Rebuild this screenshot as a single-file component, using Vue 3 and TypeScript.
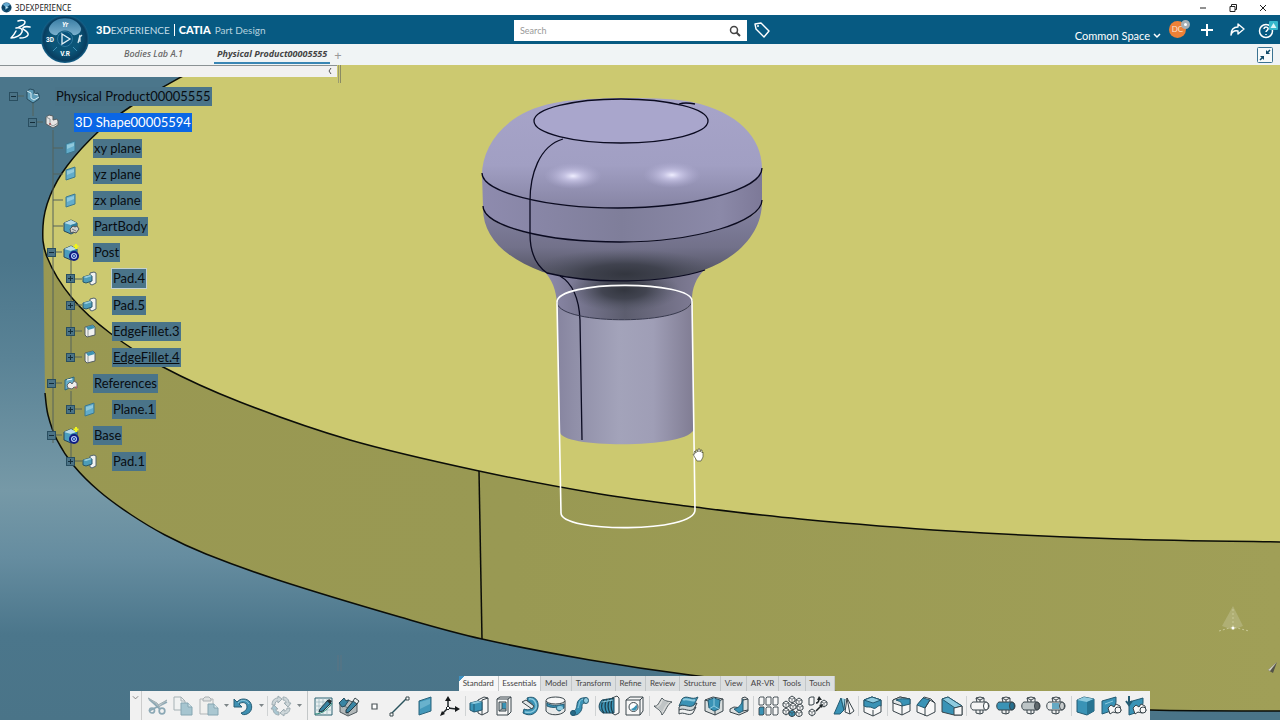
<script setup lang="ts">
import { ref } from 'vue'

type Point = [number, number]

interface TreeNode {
  label: string
  level: number
  icon: string
  toggle?: 'plus' | 'minus'
  state?: string
}

/* Smooth path through a list of points */
function curve(points: Point[], start = 'M'): string {
  let d = `${start}${points[0][0]} ${points[0][1]}`
  for (let i = 0; i < points.length - 1; i++) {
    const p0 = points[Math.max(i - 1, 0)]
    const p1 = points[i]
    const p2 = points[i + 1]
    const p3 = points[Math.min(i + 2, points.length - 1)]
    d += ` C${p1[0] + (p2[0] - p0[0]) / 6} ${p1[1] + (p2[1] - p0[1]) / 6} ${p2[0] - (p3[0] - p1[0]) / 6} ${p2[1] - (p3[1] - p1[1]) / 6} ${p2[0]} ${p2[1]}`
  }
  return d
}

const topEdge: Point[] = [
  [205, 65], [183, 76], [133, 105], [99, 131], [67, 166], [50, 196], [43, 226],
  [47, 257], [72, 298], [110, 333], [163, 367], [240, 402], [350, 440], [479, 471],
  [600, 494], [695, 507], [800, 519], [950, 531], [1120, 539], [1285, 542],
]
const bottomEdge: Point[] = [
  [45, 393], [48, 415], [57, 440], [74, 466], [99, 491], [130, 514], [165, 535], [206, 554], [278, 580],
  [400, 617], [482, 639], [590, 660], [690, 675], [850, 693], [1000, 704], [1150, 710], [1285, 711],
]
const topLine = curve(topEdge)
const bottomLine = curve(bottomEdge)
const topFace = `${topLine} L1285 60 L205 60 Z`
const discFace = `${curve([...bottomEdge].reverse())} L43 226 L72 298 L479 471 L900 500 L1285 500 Z`

const nodes: TreeNode[] = [
  { label: 'Physical Product00005555', level: 0, icon: 'product', toggle: 'minus' },
  { label: '3D Shape00005594', level: 1, icon: 'shape', toggle: 'minus', state: 'selected' },
  { label: 'xy plane', level: 2, icon: 'plane' },
  { label: 'yz plane', level: 2, icon: 'plane' },
  { label: 'zx plane', level: 2, icon: 'plane' },
  { label: 'PartBody', level: 2, icon: 'body' },
  { label: 'Post', level: 2, icon: 'bodyActive', toggle: 'minus' },
  { label: 'Pad.4', level: 3, icon: 'pad', toggle: 'plus', state: 'outlined' },
  { label: 'Pad.5', level: 3, icon: 'pad', toggle: 'plus' },
  { label: 'EdgeFillet.3', level: 3, icon: 'fillet', toggle: 'plus' },
  { label: 'EdgeFillet.4', level: 3, icon: 'fillet', toggle: 'plus', state: 'current' },
  { label: 'References', level: 2, icon: 'refs', toggle: 'minus' },
  { label: 'Plane.1', level: 3, icon: 'plane', toggle: 'plus' },
  { label: 'Base', level: 2, icon: 'bodyActive', toggle: 'minus' },
  { label: 'Pad.1', level: 3, icon: 'pad', toggle: 'plus' },
]

const cube = '<path d="M2 5 9 2l6 3v8l-6 3-7-3z" fill="#4a9dbd" stroke="#27475a"/><path d="M2 5 9 2l6 3-6 2z" fill="#b9dce8"/><path d="M9 7l6-2v8l-6 3z" fill="#2f7d9f"/>'
const treeIcons: Record<string, string> = {
  product: '<path d="M3 4l3-2 4 1v4l4-1 1 2v4l-6 4-6-4z" fill="#5f9db8" stroke="#274a5c"/><path d="M3 4l4 2v5l3 2 5-3M10 7l4 1" fill="none" stroke="#d9edf3"/>',
  shape: '<path d="M3 4l3-2 4 1v4l4-1 1 2v4l-5 3-7-4z" fill="#e6e4e3" stroke="#525c61"/><path d="M3 4l4 2v5l3 2 5-3" fill="none" stroke="#8f9697"/><circle cx="7" cy="11" r="1" fill="#a55"/>',
  plane: '<path d="M4 5l9-3v10l-9 3z" fill="#62acca" stroke="#3c788f"/><path d="M5 6l7-2v3l-7 3z" fill="#90c9dc"/>',
  body: cube + '<path d="M8 11l3-3 2 1 2-1 2 3-3 4-3-1-2 1z" fill="#d3d2ce" stroke="#555"/><path d="M10 11l4 2" stroke="#777"/>',
  bodyActive: cube + '<circle cx="12" cy="12" r="4" fill="#b9cdf7" stroke="#101d83" stroke-width="2"/><circle cx="12" cy="12" r="1.500" fill="none" stroke="#123a99"/><path d="M14 0v5M11.500 2.500h5" stroke="#eff51c" stroke-width="2"/>',
  pad: '<path d="M9 3l4-1 2 1v10l-4 2-2-1z" fill="#f1f2f1" stroke="#53646c"/><path d="M2 7l7-2 2 1v5l-6 2-3-1z" fill="#4d9cb8" stroke="#27576d"/><path d="M2 7l7-2 2 1-6 2z" fill="#9cd0df"/>',
  fillet: '<path d="M4 5l8-2 2 2v8l-8 2-2-2z" fill="#f1f1ef" stroke="#565e61"/><path d="M5 5l7-2 2 3-7 2z" fill="#3f93b1"/><path d="M7 8v6" stroke="#929999"/>',
  refs: '<path d="M3 5l9-3v9l-9 4z" fill="#67adc6" stroke="#2e667c"/><path d="M5 10l3-3 2 2 2-3 3 2v5l-3-1-2 2-4-1z" fill="#efeeec" stroke="#656b6e"/><path d="M5 5l5-1" stroke="#fff"/><path d="M14 11v3" stroke="#c55"/>',
}

const B = '#3a93b6'
const L = '#8fcbdf'
const K = '#39444a'
const W = '#f7f7f7'
const joint = (a: string, b: string, c: string) =>
  `<path d="M7 3l4-1 4 1v5l-1 1v9l-3 1-4-1V9l1-2z" fill="${a}" stroke="${K}"/><path d="M7 3l4 2 4-2M11 5v3M11 13v6" fill="none" stroke="${K}"/><path d="M4 7h13c4 1 4 7 0 8H4c-3-1-3-7 0-8z" fill="${b}" stroke="${K}"/><ellipse cx="17" cy="11" rx="2.500" ry="4" fill="${c}" stroke="${K}"/>`
const hexes = (pts: Point[], blue: number) =>
  pts.map(([x, y], i) => `<path d="M${x - 3} ${y - 1}l3-2 3 2v3l-3 2-3-2z" fill="${i === blue ? B : W}" stroke="${K}"/><path d="M${x - 3} ${y - 1}l3 1 3-1M${x} ${y}v4" fill="none" stroke="${K}" stroke-width=".6"/>`).join('')

const icons: Record<string, string> = {
  cut: '<g fill="none" stroke="#8ba8b5" stroke-width="1.700"><path d="M2 4l11 10M2 16L20 7"/><circle cx="15" cy="16" r="2.800"/><circle cx="5" cy="15.500" r="2.500"/></g><path d="M1 3l9 5 2 3zM20 5l-9 5 1 2z" fill="#c4ced2" stroke="#9fafb5"/>',
  copy: '<path d="M2 2h7l4 4v9H2z" fill="#f0f2f2" stroke="#a5b1b5"/><path d="M9 2v4h4" fill="none" stroke="#a5b1b5"/><path d="M9 8h7l4 4v8H9z" fill="#a6c5d0" stroke="#86a6b2"/><path d="M16 8v4h4" fill="#d5e4e9" stroke="#86a6b2"/>',
  paste: '<path d="M2 4h13v15H2z" fill="#f0f0ee" stroke="#b0b5b7"/><path d="M5 4l2-2h4l2 2v2H5z" fill="#dfe2e2" stroke="#a9b0b3"/><path d="M10 9h6l4 4v7H10z" fill="#aac7d1" stroke="#86a6b2"/><path d="M16 9v4h4" fill="#dce8ec" stroke="#86a6b2"/>',
  undo: '<path d="M2 4v8h8l-3-3c4-3 8-1 8 3 0 3-3 5-6 6 1 2 4 2 6 1 5-2 6-8 3-12C15 3 8 3 5 7z" fill="#3f90b2" stroke="#285e76"/><path d="M6 8c3-4 9-3 11 1" fill="none" stroke="#8ec6da"/>',
  update: '<g fill="#cdd6d9" stroke="#9cabb1"><path d="M2 10c0-4 2-7 6-7V1l4 3-4 4V6C6 6 5 7 5 10z"/><path d="M13 2c4 0 6 3 6 6h2l-3 4-4-4h2c0-2-1-3-3-3z"/><path d="M20 13c0 4-3 6-6 6v2l-4-3 4-4v2c2 0 3-1 3-3z"/><path d="M9 20c-4 0-6-3-6-6H1l3-4 4 4H6c0 2 1 3 3 3z" fill="#a9c7d2"/></g>',
  sketch: '<path d="M3 3h17v17H3z" fill="#e7eff0" stroke="#2c6272"/><path d="M3 7h17M3 11h17M3 15h17M7 3v17M11 3v17M15 3v17" stroke="#9bb8be" stroke-width=".7"/><path d="M3 19c8 0 14-6 17-11" fill="none" stroke="#2a8b78"/><path d="M8 14l8-9 3 3-8 8-4 1z" fill="#3782a0" stroke="#223843"/><path d="M15 6l2-2 3 2-2 3z" fill="#273238"/>',
  sketch3d: '<path d="M2 9l8-4 9 4v8l-9 4-8-4z" fill="#b2b8b9" stroke="#4d575c"/><path d="M2 9l8 4 9-4M10 13v8" fill="none" stroke="#6b7578"/><path d="M1 8l5-5 2 3 3-1-4 6-3 1z" fill="#3985a4" stroke="#284c5d"/><path d="M8 15l8-10 4 3-9 9-3 1z" fill="#3985a4" stroke="#223943"/><path d="M15 6l2-3 4 3-2 3z" fill="#e6ecec" stroke="#3b474c"/>',
  point: '<path d="M9 9h5v5H9z" fill="#fff" stroke="#4c5558" stroke-width="1.200"/>',
  line: '<path d="M3 19L19 3" stroke="#29535d" stroke-width="1.500"/><path d="M2 18h3v3H2zM18 2h3v3h-3z" fill="#fff" stroke="#3a4a4e"/>',
  plane: '<path d="M5 6l12-4v14L5 20z" fill="#4499bb" stroke="#2b647c"/><path d="M6 7l10-3v5L6 14z" fill="#69b2cd"/>',
  axis: '<path d="M9 13V5M9 13l8 1M9 13l-5 5" stroke="#20272a" stroke-width="1.500"/><path d="M9 1l3 5H6zM21 14l-5 3v-6zM1 21l2-5 3 3z" fill="#16191b"/><path d="M9 11l2 2-2 2-2-2z" fill="#fff" stroke="#20272a"/>',
  pad: `<path d="M10 5l6-3 4 1v14l-6 3-4-2z" fill="${W}" stroke="${K}"/><path d="M14 5v15M14 5l6-2" fill="none" stroke="${K}"/><path d="M2 8l8-2 4 1v8l-8 2-4-2z" fill="${B}" stroke="#235870"/><path d="M2 8l8-2 4 1-8 2z" fill="${L}"/><path d="M6 9v8" stroke="#235870"/>`,
  pocket: `<path d="M4 4l3-2h11v15l-3 3H4z" fill="${W}" stroke="${K}"/><path d="M4 4h11v16M15 4l3-2" fill="none" stroke="${K}"/><path d="M6 7h7v9H6z" fill="#c5cfd2" stroke="${K}"/><path d="M9 8h4v6H9z" fill="${B}"/><path d="M6 16l3-2h4M9 14V8" fill="none" stroke="${K}" stroke-width=".8"/>`,
  shaft: `<path d="M8 3c8-3 12 3 11 9-1 7-8 10-15 6l1-4c5 2 8 0 8-4 0-3-2-3-4-3z" fill="${B}" stroke="#235870"/><path d="M10 4c5-1 8 4 7 9-2 4-6 5-11 4" fill="none" stroke="${L}" stroke-width="1.500"/><path d="M3 7l4-2 8 6-2 3z" fill="#e1e6e7" stroke="${K}"/>`,
  groove: `<path d="M2 6v10c3 5 15 5 19 0V6z" fill="#e8eaea" stroke="${K}"/><ellipse cx="11.500" cy="5.500" rx="9.500" ry="3.500" fill="${W}" stroke="${K}"/><path d="M3 8c4 3 10 3 17 1v4c-3 1-3 3-5 3-3-1-3-3-2-4-4 1-8 0-10-1z" fill="${B}" stroke="#235870"/><ellipse cx="16" cy="13" rx="3" ry="2" fill="${L}"/>`,
  rib: `<path d="M3 16c4 0 4-2 5-6 0-5 4-8 9-7v5c-4 0-4 1-4 5-1 5-5 8-10 7z" fill="${B}" stroke="#235870"/><ellipse cx="17" cy="5.500" rx="2.500" ry="3" fill="${L}" stroke="#235870"/><ellipse cx="4" cy="18" rx="2.500" ry="2.500" fill="#276a87" stroke="#235870"/><path d="M9 13c2-4 0-7 5-9" fill="none" stroke="${L}"/>`,
  thread: `<path d="M14 3l5-2 2 2v15l-4 2-3-2z" fill="${W}" stroke="${K}"/><path d="M4 5l12-2v15L5 18C0 15 0 9 4 5z" fill="${B}" stroke="#1f495c"/><path d="M6 5c-3 4-3 9 0 13M9 4c-3 5-2 11 0 14M12 4c-3 5-2 11 0 14M15 3c-3 5-2 12 0 15" fill="none" stroke="#1f3f4c" stroke-width="1.300"/><path d="M4 7l11-2" stroke="${L}"/>`,
  hole: `<path d="M3 5l4-3h13v14l-3 4H3z" fill="${W}" stroke="${K}"/><path d="M3 5h14v15M17 5l3-3" fill="none" stroke="${K}"/><circle cx="10.500" cy="12" r="4.500" fill="#fff" stroke="${K}"/><path d="M14 10c-2 0-2 3-6 4 2 3 7 2 6-4z" fill="${B}"/>`,
  surface: '<path d="M2 11c4 1 5-4 8-8 3 4 7 3 10 4-5 2-6 9-10 13-1-5-5-6-8-9z" fill="#d8dad9" stroke="#4c575c"/><path d="M5 12c4 0 5-6 6-7l6 3c-4 1-5 6-7 9z" fill="#bfc4c5"/>',
  thick: `<path d="M2 15c5-5 8 2 17-3l-3 6c-5 4-9-2-14 1z" fill="#f0f2f2" stroke="${K}"/><path d="M2 12c5-5 8 2 18-4l-3 6c-5 4-10-2-15 1z" fill="#cfd7d9" stroke="${K}"/><path d="M5 4c5-5 9 2 16-2l-4 8c-5 4-10-2-15 1z" fill="${B}" stroke="#29586b"/><path d="M6 5c4-3 8 2 12 0" fill="none" stroke="${L}" stroke-width="2"/>`,
  shell: `<path d="M2 5l8-3 10 2v12l-8 4-10-4z" fill="#d9dede" stroke="${K}"/><path d="M2 5l10 3 8-4M12 8v12" fill="none" stroke="${K}"/><path d="M5 5l6-2 6 2-1 9-5 2-5-3z" fill="${B}" stroke="#245b72"/><path d="M11 3v8l-5 3M11 11l5 3" fill="none" stroke="${L}"/>`,
  stiffener: `<path d="M14 3l3-1 3 2v12l-9 4-9-3v-3l4-2 8 1z" fill="#dce0e0" stroke="${K}"/><path d="M6 14c5-1 8-5 9-10v12l-4 2z" fill="${B}" stroke="#245b72"/><path d="M15 5l5-1M15 16l5-1" stroke="${K}"/>`,
  rectPattern: [2, 9, 16].map(x => [2, 12].map(y => `<path d="M${x} ${y + 1}l1-1h4v7l-1 1H${x}z" fill="${x === 2 && y === 12 ? B : W}" stroke="${K}" stroke-width=".9"/>`).join('')).join(''),
  circPattern: hexes([[10, 4], [17, 6], [4, 9], [11, 11], [18, 12], [4, 16], [10, 18], [17, 18]], 6),
  userPattern: '<path d="M2 3l2-1h3v7l-2 1H2z" fill="#f7f7f7" stroke="#39444a"/>' + hexes([[17, 8], [5, 17]], -1) + '<path d="M9 8c3 0 3-3 3-5M9 16l5-5" fill="none" stroke="#202729" stroke-width="1.500"/><path d="M12 1l3 4h-5zM16 9l-1 4-3-3z" fill="#202729"/>',
  mirror: `<path d="M1 19L8 3l3 12-4 4z" fill="${B}" stroke="#245b72"/><path d="M8 3l3 12 1-11" fill="${L}" stroke="#245b72"/><path d="M14 3l7 13-4 3-5-2z" fill="${W}" stroke="${K}"/><path d="M14 3l3 16" stroke="${K}"/>`,
  split: `<path d="M3 5l8-3 9 3v12l-8 4-9-4z" fill="${W}" stroke="${K}"/><path d="M3 5l8-3 9 3v6c-3-2-5 4-8 2s-6 0-9-2z" fill="${B}" stroke="#245b72"/><path d="M3 5l9 3 8-3-9-3z" fill="${L}" stroke="#245b72"/><path d="M12 15v6" stroke="${K}"/>`,
  edgeFillet: `<path d="M3 5l7-3 10 2v12l-8 4-9-4z" fill="${W}" stroke="${K}"/><path d="M3 5l7-3 10 2-6 2-2 5-9-3z" fill="#dfe4e5" stroke="${K}"/><path d="M6 5c4-2 9-1 14-1v5l-8 2c0-3 0-4-6-6z" fill="${B}" stroke="#245b72"/><path d="M12 11v9" stroke="${K}"/>`,
  chamfer: `<path d="M2 10l7-8 7 2 4 4v9l-8 4-10-4z" fill="${W}" stroke="${K}"/><path d="M2 10l6-7 7 2-5 8z" fill="${B}" stroke="#245b72"/><path d="M10 13l5-8 5 3M10 13v8" fill="none" stroke="${K}"/>`,
  draft: `<path d="M1 4l6-2 14 9v9h-8L1 17z" fill="${B}" stroke="${K}"/><path d="M1 4l6-2 14 9-7 2z" fill="${L}" stroke="#245b72"/><path d="M13 13l8-2v9h-8z" fill="${W}" stroke="${K}"/>`,
  assemble: joint('#f0f1f1', '#f4f4f4', '#fff'),
  add: joint('#f0f1f1', B, '#276f8e'),
  remove: joint('#f0f1f1', '#bcc4c6', '#60696d'),
  intersect: joint('#f0f1f1', '#e9ebeb', '#c8cccd') + `<path d="M7 8h7v6H7z" fill="${B}" opacity=".75"/>`,
  solid: `<path d="M3 5l7-3 10 2v12l-7 4-10-3z" fill="${B}" stroke="#245b72"/><path d="M3 5l7-3 10 2-7 3z" fill="${L}"/><path d="M13 7l7-3v12l-7 4z" fill="#287492"/>`,
  planeRef: `<path d="M2 6l14-4v5l-2 8-12 4z" fill="${B}" stroke="#245b72"/><path d="M5 9l8-3" stroke="${L}"/><path d="M8 13l3-3 3 2 2-3 4 2 1 5-4 2-4-1-3 2z" fill="${W}" stroke="${K}"/><circle cx="18" cy="15" r="3" fill="${W}" stroke="${K}"/>`,
  planeIn: `<path d="M4 7l14-4v5l-2 8-12 4z" fill="${B}" stroke="#245b72"/><path d="M4 1v8M1 6l3 4 3-4" fill="none" stroke="#245b72" stroke-width="2"/><path d="M8 13l3-3 3 2 2-3 4 2 1 5-4 2-4-1-3 2z" fill="${W}" stroke="${K}"/><circle cx="18" cy="15" r="3" fill="${W}" stroke="${K}"/>`,
}

const tools: string[] = [
  'cut', 'copy', 'paste', '>', 'undo', '>', '|', 'update', '>', '||', 'sketch', 'sketch3d', 'point', 'line', 'plane', 'axis', '|',
  'pad', 'pocket', 'shaft', 'groove', 'rib', '|', 'thread', 'hole', '|', 'surface', 'thick', 'shell', 'stiffener', '|',
  'rectPattern', 'circPattern', 'userPattern', 'mirror', '|', 'split', '|', 'edgeFillet', 'chamfer', 'draft', '|',
  'assemble', 'add', 'remove', 'intersect', '|', 'solid', 'planeRef', 'planeIn',
]
const sections = ['Standard', 'Essentials', 'Model', 'Transform', 'Refine', 'Review', 'Structure', 'View', 'AR-VR', 'Tools', 'Touch']
const section = ref('Essentials')
const query = ref('')
</script>

<template>
  <div class="app">
    <div class="titlebar">
      <svg class="app-icon" viewBox="0 0 12 12"><circle cx="6" cy="6" r="5.500" fill="#0c4263" /><path d="M2 3c2-3 6-3 8 0L6 6z" fill="#65a8cf" /><path d="M5 4l3 2-3 2zM2 8l2 2M10 8L8 10" fill="#d8edf6" stroke="#5daad0" stroke-width=".6" /></svg>
      <span class="app-name">3DEXPERIENCE</span>
      <div class="window-buttons">
        <button aria-label="Minimize"><svg viewBox="0 0 10 10"><path d="M2 5h6" /></svg></button>
        <button aria-label="Restore"><svg viewBox="0 0 10 10"><path d="M2 3.500h5v5H2zM3.500 3.500v-2h5v5H7" /></svg></button>
        <button aria-label="Close"><svg viewBox="0 0 10 10"><path d="M2 2l6 6M8 2L2 8" /></svg></button>
      </div>
    </div>

    <header class="header">
      <svg class="ds-logo" viewBox="0 0 22 22"><g fill="none" stroke="#fff" stroke-linecap="round" stroke-linejoin="round"><path d="M9 2c3-1 7-1 7 1 0 2-3 4-6 5" stroke-width="1.500" /><path d="M7 9c4-1 7 1 6 4-1 3-6 6-11 6 2-2 4-5 5-7" stroke-width="1.500" /><path d="M21 8c-4-1-8 0-7 2 1 1 6 3 5 6-1 2-5 3-8 3" stroke-width="1.600" /></g></svg>
      <h1 class="brand"><b>3D</b><span class="soft">EXPERIENCE</span><i class="bar"></i><b>CATIA</b><span class="module">Part Design</span></h1>
      <form class="search" @submit.prevent>
        <input v-model="query" type="text" placeholder="Search" aria-label="Search" />
        <button aria-label="Run search"><svg viewBox="0 0 12 12"><circle cx="5" cy="5" r="3.500" fill="none" stroke="#444" stroke-width="1.500" /><path d="M7.500 7.500l3.500 3.500" stroke="#444" stroke-width="2" /></svg></button>
      </form>
      <button class="tag" aria-label="Tags"><svg viewBox="0 0 16 16"><path d="M1 2l6-1 8 8-5 6-8-8z" fill="none" stroke="#fff" stroke-width="1.400" stroke-linejoin="round" /><circle cx="4" cy="4" r="1" fill="#fff" /></svg></button>
      <div class="actions">
        <button class="space">Common Space <svg viewBox="0 0 8 6"><path d="M1 1l3 3 3-3" fill="none" stroke="#fff" stroke-width="1.500" /></svg></button>
        <button class="avatar" aria-label="Profile">DC<span class="presence"></span></button>
        <button class="glyph plus" aria-label="Add"><svg viewBox="0 0 16 16"><path d="M8 2v12M2 8h12" stroke="#fff" stroke-width="2" /></svg></button>
        <button class="glyph share" aria-label="Share"><svg viewBox="0 0 16 16"><path d="M9 2l6 5-6 5V9c-4-1-6 1-7 4 0-5 2-8 7-8z" fill="none" stroke="#fff" stroke-width="1.400" stroke-linejoin="round" /></svg></button>
        <button class="glyph help" aria-label="Help"><svg viewBox="0 0 20 18"><circle cx="8" cy="10" r="6.500" fill="none" stroke="#fff" stroke-width="1.500" /><path d="M6 8c0-3 5-2 4 0 0 1-2 2-2 3M8 13v1" fill="none" stroke="#fff" stroke-width="1.500" /><rect x="11" y="0" width="9" height="9" rx="1" fill="#35b8cc" /><path d="M15.500 2l3 5h-6z" fill="#d9f6f8" /></svg></button>
      </div>
      <svg class="compass" viewBox="0 0 50 50" aria-label="Compass">
        <defs>
          <radialGradient id="compassBase"><stop offset=".6" stop-color="#0b5578" /><stop offset=".9" stop-color="#083e60" /><stop offset="1" stop-color="#16638b" /></radialGradient>
          <linearGradient id="compassTop" x1="0" y1="0" x2="0" y2="1"><stop offset="0" stop-color="#397da4" /><stop offset="1" stop-color="#7ab0ce" /></linearGradient>
        </defs>
        <circle cx="25" cy="25" r="24" fill="url(#compassBase)" />
        <path d="M9 14C14 1 36 1 41 14c1 4-4 8-8 7-3-6-13-6-16 0-4 1-9-3-8-7z" fill="url(#compassTop)" />
        <circle cx="25" cy="25" r="7.500" fill="#07517a" stroke="#2f789c" />
        <path d="M22 20l8 5-8 5z" fill="#0c5d86" stroke="#e2f0f6" stroke-width="1.300" />
        <path d="M13 37l4-4M37 37l-4-4" stroke="#3d8fb5" />
        <path d="M40 21l-2 8M42 21l-2 2v5" fill="none" stroke="#d8e8ef" stroke-width="1.200" />
        <g fill="#fff" font-family="Roboto, sans-serif" font-weight="700" font-size="6.500" text-anchor="middle"><text x="10" y="28">3D</text><text x="25" y="13" font-style="italic">Yr</text><text x="25" y="42">V.R</text></g>
      </svg>
    </header>

    <nav class="doc-tabs">
      <a href="#lab">Bodies Lab A.1</a>
      <a href="#product" class="active">Physical Product00005555</a>
      <button class="add-tab" aria-label="New tab">+</button>
      <button class="collapse" aria-label="Exit full view"><svg viewBox="0 0 16 16"><rect x=".5" y=".5" width="15" height="15" rx="1" fill="#f7fafa" stroke="#3b7391" /><path d="M13 3l-3 3M3 13l3-3" stroke="#124b68" stroke-width="1.500" /><path d="M9 3v4h4zM7 13V9H3z" fill="#124b68" /></svg></button>
    </nav>

    <main class="viewport">
      <svg class="scene" viewBox="0 65 1280 655" preserveAspectRatio="xMidYMid slice" aria-hidden="true">
        <defs>
          <linearGradient id="sky" x1="0" y1="65" x2="0" y2="720" gradientUnits="userSpaceOnUse"><stop offset="0" stop-color="#4b768b" /><stop offset=".3" stop-color="#4b768b" /><stop offset=".45" stop-color="#5a8396" /><stop offset=".65" stop-color="#7699a7" /><stop offset=".75" stop-color="#668da0" /><stop offset=".87" stop-color="#4b768b" /><stop offset="1" stop-color="#4a7488" /></linearGradient>
          <linearGradient id="side" x1="0" y1="0" x2="1280" y2="0" gradientUnits="userSpaceOnUse"><stop offset="0" stop-color="#999852" /><stop offset=".4" stop-color="#999953" /><stop offset="1" stop-color="#a09f57" /></linearGradient>
          <linearGradient id="dome" x1="0" y1="98" x2="0" y2="210" gradientUnits="userSpaceOnUse"><stop offset="0" stop-color="#a7a4c9" /><stop offset=".6" stop-color="#a19fc3" /><stop offset="1" stop-color="#8583a2" /></linearGradient>
          <linearGradient id="band" x1="482" y1="0" x2="762" y2="0" gradientUnits="userSpaceOnUse"><stop offset="0" stop-color="#8e8bae" /><stop offset=".5" stop-color="#7f7e9a" /><stop offset=".85" stop-color="#8b89a8" /><stop offset="1" stop-color="#7d7998" /></linearGradient>
          <linearGradient id="under" x1="0" y1="205" x2="0" y2="282" gradientUnits="userSpaceOnUse"><stop offset="0" stop-color="#8583a3" /><stop offset=".55" stop-color="#72718a" /><stop offset="1" stop-color="#4a4b58" /></linearGradient>
          <linearGradient id="cylinder" x1="558" y1="0" x2="694" y2="0" gradientUnits="userSpaceOnUse"><stop offset="0" stop-color="#8785a0" /><stop offset=".12" stop-color="#908fa8" /><stop offset=".45" stop-color="#a3a3ba" /><stop offset=".7" stop-color="#9f9eb6" /><stop offset="1" stop-color="#807c93" /></linearGradient>
          <linearGradient id="neck" x1="548" y1="0" x2="702" y2="0" gradientUnits="userSpaceOnUse"><stop offset="0" stop-color="#8c89a9" /><stop offset=".5" stop-color="#5c5d6e" /><stop offset="1" stop-color="#827e98" /></linearGradient>
          <radialGradient id="shine"><stop offset="0" stop-color="#efeeff" /><stop offset=".3" stop-color="#cfccec" stop-opacity=".8" /><stop offset="1" stop-color="#b1aed4" stop-opacity="0" /></radialGradient>
          <radialGradient id="shade"><stop offset="0" stop-color="#33363f" /><stop offset=".4" stop-color="#3b3e49" stop-opacity=".85" /><stop offset="1" stop-color="#555868" stop-opacity="0" /></radialGradient>
          <clipPath id="underClip"><path d="M483 208C483 226 545 242 620 242S762 222 762 202C762 230 742 256 704 270C670 283 590 284 543 272C506 258 483 238 483 208Z" /></clipPath>
        </defs>
        <rect y="60" width="1280" height="670" fill="url(#sky)" />
        <path :d="discFace" fill="url(#side)" />
        <path :d="topFace" fill="#ccc970" />
        <g fill="none" stroke="#0b0d08" stroke-width="1.500">
          <path :d="topLine" /><path :d="bottomLine" /><path d="M479 471L482 639" />
        </g>
        <path d="M338 655v16M341 655v16" stroke="#5c7582" />

        <path d="M543 270C553 280 556 291 557 303C557 326 692 326 692 300C692 288 696 278 705 269Z" fill="url(#neck)" />
        <ellipse cx="624" cy="290" rx="56" ry="22" fill="url(#shade)" />
        <path d="M557 302C557 326 692 326 692 300L694 428C694 449 560 449 560 432Z" fill="url(#cylinder)" />
        <path d="M483 208C483 226 545 242 620 242S762 222 762 202C762 230 742 256 704 270C670 283 590 284 543 272C506 258 483 238 483 208Z" fill="url(#under)" />
        <g clip-path="url(#underClip)"><ellipse cx="625" cy="274" rx="100" ry="25" fill="url(#shade)" /></g>
        <path d="M482 173C482 192 545 208 618 208S762 190 762 168V202C762 222 695 242 620 242S483 226 483 208Z" fill="url(#band)" />
        <path d="M482 175C482 145 506 112 554 103C580 97 665 96 692 102C738 112 762 138 762 168C762 190 691 208 618 208S482 192 482 175Z" fill="url(#dome)" />
        <ellipse cx="573" cy="176" rx="29" ry="13" fill="url(#shine)" /><ellipse cx="672" cy="175" rx="29" ry="13" fill="url(#shine)" />
        <g fill="none" stroke="#0a0a20" stroke-width="1.300">
          <ellipse cx="621" cy="121" rx="87" ry="22" fill="#a9a6cc" />
          <path d="M482 173C482 192 545 208 618 208S762 190 762 168M483 206C483 226 545 242 620 242S762 222 762 200" />
          <path d="M563 139C539 146 530 175 530 201V234C530 254 537 266 547 273C591 284 663 284 705 270" />
          <path d="M560 276C572 283 579 297 580 320L582 440M679 104C685 102 690 103 695 104" />
          <path d="M557 302C557 326 692 326 692 300" stroke="#36384e" stroke-width="1" />
        </g>
        <path d="M557 302C557 280 692 280 692 301L695 510C695 533 561 533 561 513Z" fill="none" stroke="#fff" stroke-width="1.600" />
        <path d="M694 452l1-1 1 2v-3h1l1 2v-3h2v3l1-2h1v3l1-1v5l-2 4h-4l-3-5-1-2h2z" fill="#fff" stroke="#4c4d35" stroke-width=".7" />
        <g><path d="M1233 606l10 20-10 4-11-4z" fill="#b9b984" opacity=".65" /><path d="M1233 609v19M1219 631l14-4 16 4" fill="none" stroke="#c8c895" stroke-width="1" stroke-dasharray="2 2" /><circle cx="1233" cy="628" r="1.500" fill="#fff" /></g>
        <path d="M1277 662l-9 8 5 3z" fill="#535248" /><path d="M1277 662l-9 8 2 1z" fill="#d0cec0" />
      </svg>

      <div class="panel-strip"><button aria-label="Collapse tree"><svg viewBox="0 0 6 8"><path d="M4 1L2 4l2 3" fill="none" stroke="#555" /></svg></button></div>

      <section class="tree-area" aria-label="Specification tree">
        <svg class="links" viewBox="0 0 120 392" aria-hidden="true"><path d="M18 13h6M33 20v13M37 39h6M53 47v313M53 65h10M53 91h10M53 117h10M53 143h10M56 169h6M56 300h6M56 352h6M71 177v97M75 196h7M75 222h7M75 248h7M75 274h7M71 308v18M75 326h7M71 360v18M75 378h7" /></svg>
        <ul class="tree">
          <li v-for="node in nodes" :key="node.label" :class="'level-' + node.level">
            <button v-if="node.toggle" class="toggle" :aria-label="'Toggle ' + node.label"><svg viewBox="0 0 9 9"><path :d="node.toggle === 'plus' ? 'M2 4.500h5M4.500 2v5' : 'M2 4.500h5'" /></svg></button>
            <span v-else class="toggle-gap"></span>
            <svg class="node-icon" viewBox="0 0 18 18" aria-hidden="true" v-html="treeIcons[node.icon]"></svg>
            <button class="label" :class="node.state">{{ node.label }}</button>
          </li>
        </ul>
      </section>

      <footer class="action-bar">
        <div class="sections">
          <button v-for="name in sections" :key="name" :class="{ on: name === section || name === 'Standard' }" @click="section = name">{{ name }}</button>
        </div>
        <div class="tools">
          <button class="fold" aria-label="Hide action bar"><svg viewBox="0 0 8 6"><path d="M1 1l3 3 3-3" fill="none" stroke="#777" /></svg></button>
          <div class="tool-row">
            <template v-for="(tool, i) in tools" :key="i">
              <button v-if="tool === '>'" class="caret" aria-label="More"><svg viewBox="0 0 7 4"><path d="M1 0h5L3.500 3z" fill="#7d8588" /></svg></button>
              <i v-else-if="tool[0] === '|'" class="divider" :class="{ wide: tool === '||' }"></i>
              <button v-else class="tool" :aria-label="tool"><svg viewBox="0 0 22 22" v-html="icons[tool]"></svg></button>
            </template>
          </div>
        </div>
      </footer>
    </main>
  </div>
</template>

<style>
html, body { margin: 0; height: 100%; }
</style>

<style scoped>
.app { display: flex; flex-direction: column; height: 100vh; overflow: hidden; font-family: Lato, "Noto Sans", sans-serif; }
button { margin: 0; padding: 0; border: 0; background: none; font: inherit; color: inherit; }
svg { display: block; }

.titlebar { display: flex; align-items: center; flex: none; height: 15px; padding-left: 1px; background: #fff; color: #222; }
.app-icon { width: 11px; height: 11px; }
.app-name { margin-left: 3px; font: 8px/14px "Noto Sans", sans-serif; }
.window-buttons { display: flex; gap: 20px; margin-left: auto; padding-right: 12px; }
.window-buttons svg { width: 10px; height: 10px; fill: none; stroke: #222; }

.header { position: relative; display: flex; align-items: center; flex: none; height: 29px; background: #075a82; color: #fff; z-index: 2; }
.ds-logo { width: 22px; height: 22px; margin-left: 9px; }
.compass { position: absolute; left: 40px; top: -1px; width: 50px; height: 50px; }
.brand { display: flex; align-items: center; margin: 0 0 0 65px; font-size: 11px; line-height: 16px; font-weight: 400; white-space: nowrap; }
.brand b { font-weight: 900; }
.soft { color: #c3dce7; font-size: 10px; }
.bar { width: 1px; height: 12px; margin: 0 4px; background: #fff; }
.module { margin-left: 4px; color: #b5d2df; font-size: 10px; }
.search { position: absolute; left: 514px; top: 5px; display: flex; width: 233px; height: 21px; background: #fff; }
.search input { flex: 1; min-width: 0; padding: 0 6px; border: 0; outline: 0; background: none; font: 9px/20px Lato, sans-serif; color: #333; }
.search input::placeholder { color: #999; opacity: 1; }
.search button { padding-right: 6px; }
.search svg { width: 12px; height: 12px; }
.tag { position: absolute; left: 754px; top: 7px; }
.tag svg { width: 16px; height: 16px; }
.actions { display: flex; align-items: center; margin-left: auto; padding-right: 2px; }
.space { display: flex; align-items: center; gap: 3px; padding-top: 12px; font-size: 11px; line-height: 16px; white-space: nowrap; }
.space svg { width: 8px; height: 6px; }
.avatar { position: relative; width: 17px; height: 17px; margin-left: 8px; border-radius: 50%; background: #ed8137; font-size: 8px; line-height: 17px; text-align: center; color: #fbe3d2; }
.presence { position: absolute; right: -4px; top: -1px; width: 3px; height: 3px; border: 3px solid #a6b0b5; border-radius: 50%; background: #fff; }
.glyph svg { width: 16px; height: 16px; }
.plus { margin-left: 13px; }
.share { margin-left: 14px; }
.help { margin-left: 13px; }
.help svg { width: 20px; height: 18px; }

.doc-tabs { position: relative; display: flex; align-items: center; flex: none; height: 21px; padding-left: 121px; background: #f0f4f5; }
.doc-tabs a { box-sizing: border-box; height: 19px; padding: 0 3px; border-bottom: 2px solid transparent; font: italic 500 9px/17px "Noto Sans", sans-serif; color: #666; text-decoration: none; white-space: nowrap; }
.doc-tabs a.active { margin-left: 28px; border-color: #3986b4; color: #444; font-weight: 700; font-family: "Open Sans", sans-serif; }
.add-tab { margin-left: 4px; font: 13px/18px "Noto Sans", sans-serif; color: #999; }
.collapse { margin-left: auto; margin-right: 7px; }
.collapse svg { width: 16px; height: 16px; }

.viewport { position: relative; flex: 1; min-height: 0; display: flex; flex-direction: column; overflow: hidden; background: #4b768b; }
.scene { position: absolute; inset: 0; width: 100%; height: 100%; }
.panel-strip { position: relative; box-sizing: border-box; flex: none; width: 341px; height: 18px; border-right: 1px solid #8a8b63; }
.panel-strip::before { content: ""; position: absolute; left: 0; top: 0; box-sizing: border-box; width: 337px; height: 12px; border-top: 1px solid #8a9294; background: #f1f1f1; }
.panel-strip::after { content: ""; position: absolute; right: 1px; top: 0; width: 1px; height: 18px; background: #9b9c70; }
.panel-strip button { position: absolute; right: 7px; top: 2px; }
.panel-strip svg { width: 6px; height: 8px; }

.tree-area { position: relative; flex: none; width: 260px; height: 392px; }
.links { position: absolute; left: 0; top: 0; width: 120px; height: 392px; fill: none; stroke: #55625a; stroke-width: 1; }
.tree { position: relative; display: grid; grid-auto-rows: 1fr; height: 100%; margin: 0; padding: 0; list-style: none; }
.tree li { display: flex; align-items: center; }
.level-0 { padding-left: 9px; }
.level-1 { padding-left: 28px; }
.level-2 { padding-left: 47px; }
.level-3 { padding-left: 66px; }
.toggle, .toggle-gap { width: 9px; height: 9px; }
.toggle { background: #4b7386; box-shadow: inset 0 0 0 1px #294e60; }
.toggle svg { width: 9px; height: 9px; fill: none; stroke: #142c38; }
.node-icon { width: 18px; height: 18px; margin-left: 6px; }
.label { height: 19px; margin-left: 13px; padding: 0 1px; background: #4a7489; color: #080c10; font: 13px/19px Lato, sans-serif; white-space: nowrap; }
.label.selected { background: #0a66e5; color: #fff; }
.label.outlined { box-shadow: 0 0 0 1px #c3d1d0; }
.label.current { text-decoration: underline; }

.action-bar { position: relative; margin: auto 130px 0; }
.sections { display: flex; width: 376px; margin-left: 329px; }
.sections button { flex: 1 1 auto; height: 15px; padding: 0 3px; border-right: 1px solid #c2c6c8; background: #dcdfe0; color: #444; font-size: 8px; line-height: 15px; }
.sections button.on { background: #f7f7f7; }
.sections button:first-child { background: linear-gradient(135deg, #3f92c2 4px, #f7f7f7 4px); }
.tools { display: flex; height: 29px; background: #f1f1f1; }
.fold { display: flex; width: 12px; padding: 4px 2px; border-right: 1px solid #ccc; box-sizing: border-box; }
.fold svg { width: 8px; height: 6px; }
.tool-row { display: flex; flex: 1; align-items: center; justify-content: space-between; padding: 0 2px 0 5px; }
.tool { width: 23px; }
.tool svg { width: 22px; height: 22px; }
.caret { width: 7px; }
.caret svg { width: 7px; height: 4px; }
.divider { width: 1px; height: 20px; background: #cfd2d3; }
.divider.wide { height: 29px; margin: 0 2px; background: #c3c7c8; }
</style>
